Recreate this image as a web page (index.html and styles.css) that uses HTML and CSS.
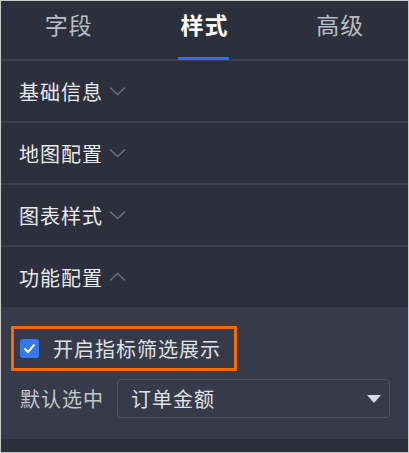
FILE: index.html
```html
<!DOCTYPE html>
<html lang="zh-CN">
<head>
    <meta charset="UTF-8">
    <title>样式配置</title>
    <link rel="stylesheet" href="styles.css">
</head>
<body>
    <div class="panel">
        <div class="tabs">
            <div class="tab">字段</div>
            <div class="tab active">样式</div>
            <div class="tab">高级</div>
        </div>

        <div class="section">
            <span class="section-title">基础信息</span>
            <svg class="chevron" width="17" height="10" viewBox="0 0 17 10"><path d="M1 1.5 L8.5 8.5 L16 1.5" fill="none" stroke="#6a6f7e" stroke-width="1.6"/></svg>
        </div>
        <div class="section">
            <span class="section-title">地图配置</span>
            <svg class="chevron" width="17" height="10" viewBox="0 0 17 10"><path d="M1 1.5 L8.5 8.5 L16 1.5" fill="none" stroke="#6a6f7e" stroke-width="1.6"/></svg>
        </div>
        <div class="section">
            <span class="section-title">图表样式</span>
            <svg class="chevron" width="17" height="10" viewBox="0 0 17 10"><path d="M1 1.5 L8.5 8.5 L16 1.5" fill="none" stroke="#6a6f7e" stroke-width="1.6"/></svg>
        </div>
        <div class="section open">
            <span class="section-title">功能配置</span>
            <svg class="chevron" width="17" height="10" viewBox="0 0 17 10"><path d="M1 8.5 L8.5 1.5 L16 8.5" fill="none" stroke="#6a6f7e" stroke-width="1.6"/></svg>
        </div>

        <div class="section-body">
            <div class="highlight">
                <span class="checkbox">
                    <svg width="13" height="11" viewBox="0 0 13 11"><path d="M1.5 5.5 L5 9 L11.5 1.5" fill="none" stroke="#fff" stroke-width="2"/></svg>
                </span>
                <span class="check-label">开启指标筛选展示</span>
            </div>
            <div class="field">
                <span class="field-label">默认选中</span>
                <div class="select">
                    <span>订单金额</span>
                    <span class="caret"></span>
                </div>
            </div>
        </div>
        <div class="footer"></div>
    </div>
</body>
</html>
```

FILE: styles.css
```css
body {
    margin: 0;
    padding: 0;
    font-family: "Noto Sans CJK SC", "Noto Sans", sans-serif;
    background-color: #fff;
}

.panel {
    width: 407px;
    height: 451px;
    border: 1px solid #c9c9c9;
    background-color: #2c303d;
    display: flex;
    flex-direction: column;
    overflow: hidden;
}

.tabs {
    display: flex;
    height: 58px;
    border-bottom: 2px solid #3b3f4c;
}

.tab {
    flex: 1;
    display: flex;
    justify-content: center;
    align-items: center;
    padding-bottom: 12px;
    font-size: 23px;
    letter-spacing: 1px;
    color: #b9bdc6;
}

.tab.active {
    color: #fff;
    font-weight: bold;
    position: relative;
}

.tab.active::after {
    content: "";
    position: absolute;
    bottom: -1px;
    left: 50%;
    width: 51px;
    margin-left: -27px;
    height: 3px;
    background-color: #2f6ef0;
}

.section {
    display: flex;
    align-items: center;
    height: 60px;
    padding-left: 18px;
    border-bottom: 2px solid #3b3f4c;
}

.section.open {
    border-bottom: none;
    height: 60px;
}

.section-title {
    font-size: 20px;
    letter-spacing: 1px;
    color: #e9eaee;
}

.chevron {
    margin-left: 6px;
}

.section-body {
    background-color: #373b49;
    padding: 19px 18px 21px 10px;
}

.highlight {
    display: inline-flex;
    align-items: center;
    border: 3px solid #f26a0c;
    padding: 0 13px 0 6px;
    height: 39px;
}

.checkbox {
    width: 19px;
    height: 19px;
    border-radius: 3px;
    background-color: #3677f0;
    display: flex;
    justify-content: center;
    align-items: center;
}

.check-label {
    margin-left: 14px;
    font-size: 20px;
    letter-spacing: 1px;
    color: #dfe1e6;
}

.field {
    display: flex;
    align-items: center;
    margin-top: 8px;
    padding-left: 9px;
}

.field-label {
    font-size: 20px;
    letter-spacing: 1px;
    color: #c4c7cf;
    width: 97px;
}

.select {
    flex: 1;
    height: 37px;
    border: 1px solid #4c5060;
    border-radius: 4px;
    display: flex;
    align-items: center;
    justify-content: space-between;
    padding: 0 8px 0 13px;
    font-size: 20px;
    letter-spacing: 1px;
    color: #dfe1e6;
}

.caret {
    width: 0;
    height: 0;
    border-left: 7px solid transparent;
    border-right: 7px solid transparent;
    border-top: 8px solid #d8dae0;
}

.footer {
    flex: 1;
    background-color: #2c303d;
}
```
